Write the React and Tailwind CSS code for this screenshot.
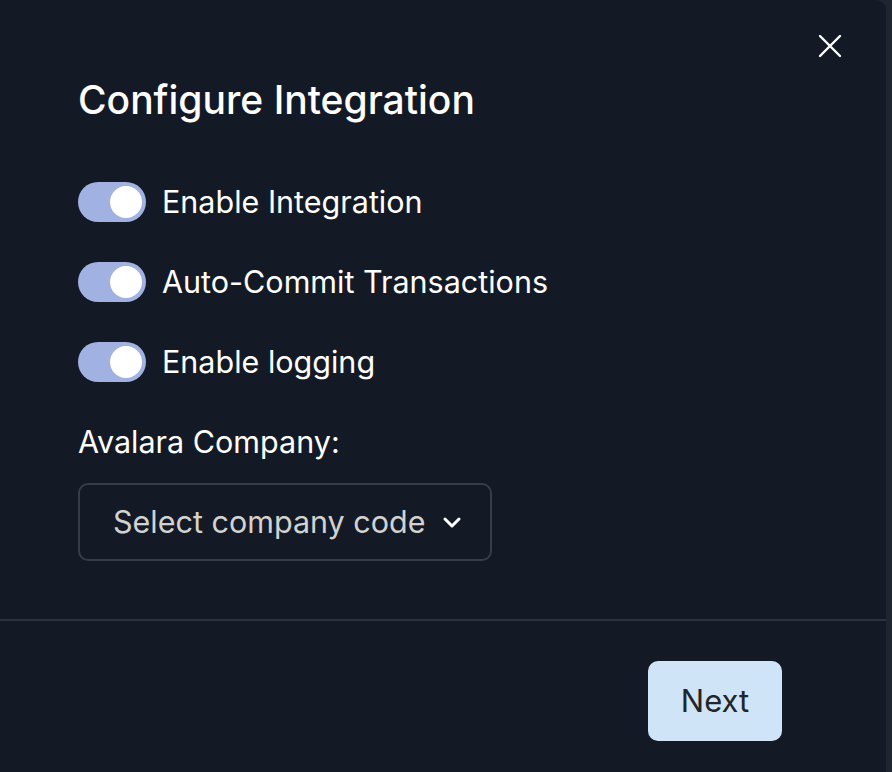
import React from "react";

function Toggle() {
  return (
    <div className="relative w-[68px] h-[40px] rounded-full bg-[#a1b1e1] shrink-0">
      <div className="absolute right-[4px] top-[4px] w-[32px] h-[32px] rounded-full bg-white" />
    </div>
  );
}

export default function App() {
  const rows = ["Enable Integration", "Auto-Commit Transactions", "Enable logging"];
  return (
    <div className="w-full h-[772px] flex bg-[#1f2630] overflow-hidden" style={{ fontFamily: "Inter, 'Noto Sans', sans-serif" }}>
      <div className="w-[886px] h-full bg-[#141a25] rounded-tr-[10px] flex flex-col">
        <div className="relative px-[78px] pt-[78px] pb-[58px]">
          <button className="absolute right-[44px] top-[34px] w-[24px] h-[24px] text-white">
            <svg viewBox="0 0 24 24" width="24" height="24" fill="none" stroke="currentColor" strokeWidth="2.4" strokeLinecap="round">
              <path d="M2 2L22 22M22 2L2 22" />
            </svg>
          </button>
          <h1 className="text-[39px] leading-[44px] font-medium text-white">Configure Integration</h1>
          <div className="mt-[60px] flex flex-col gap-[40px]">
            {rows.map((r) => (
              <div key={r} className="flex items-center gap-[16px] h-[40px]">
                <Toggle />
                <span className="text-[30.5px] text-white">{r}</span>
              </div>
            ))}
          </div>
          <div className="mt-[40px] text-[30.5px] leading-[40px] text-white">Avalara Company:</div>
          <div className="mt-[21px] w-[414px] h-[78px] rounded-[10px] border-2 border-[#373d47] flex items-center pl-[33px] pr-[28px] justify-between">
            <span className="text-[30.5px] text-[#d2d3d0]">Select company code</span>
            <svg width="20" height="14" viewBox="0 0 20 14" fill="none" stroke="white" strokeWidth="3" strokeLinecap="round" strokeLinejoin="round">
              <path d="M3 4L10 11L17 4" />
            </svg>
          </div>
        </div>
        <div className="h-[2px] bg-[#2d333d]" />
        <div className="flex justify-end pr-[104px] pt-[40px]">
          <button className="w-[134px] h-[80px] rounded-[10px] bg-[#cfe4f7] text-[31px] text-[#222427]">Next</button>
        </div>
      </div>
      <div className="flex-1" />
    </div>
  );
}
